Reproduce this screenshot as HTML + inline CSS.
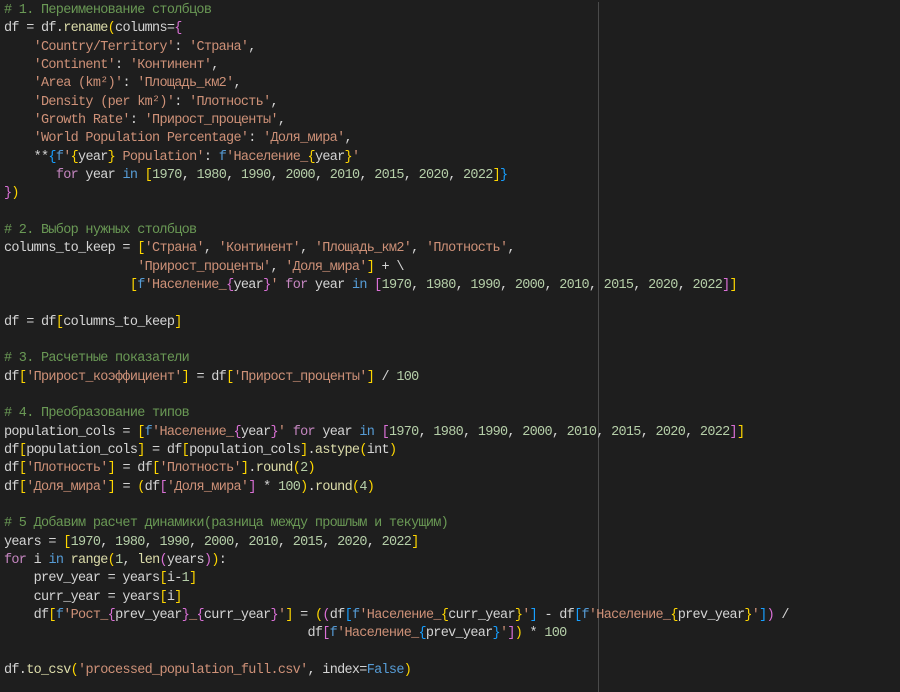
<!DOCTYPE html>
<html><head><meta charset="utf-8"><style>
html,body{margin:0;padding:0;background:#1e1e1e;width:900px;height:692px;overflow:hidden}
pre{margin:0;position:absolute;left:4px;top:2px;font-family:"Liberation Mono","DejaVu Sans Mono",monospace;font-size:13.5px;letter-spacing:-0.7px;line-height:18.33px;color:#d4d4d4;white-space:pre}
.ruler{position:absolute;left:598px;top:2px;width:1px;height:690px;background:#4a4a4a}
.c{color:#6a9955}.s{color:#ce9178}.n{color:#b5cea8}.k{color:#c586c0}.b{color:#569cd6}.f{color:#dcdcaa}
.y{color:#ffd700}.p{color:#da70d6}.u{color:#179fff}
</style></head><body>
<div class="ruler"></div>
<pre><span class="c"># 1. Переименование столбцов</span>
df = df.<span class="f">rename</span><span class="y">(</span>columns=<span class="p">{</span>
    <span class="s">'Country/Territory'</span>: <span class="s">'Страна'</span>,
    <span class="s">'Continent'</span>: <span class="s">'Континент'</span>,
    <span class="s">'Area (km²)'</span>: <span class="s">'Площадь_км2'</span>,
    <span class="s">'Density (per km²)'</span>: <span class="s">'Плотность'</span>,
    <span class="s">'Growth Rate'</span>: <span class="s">'Прирост_проценты'</span>,
    <span class="s">'World Population Percentage'</span>: <span class="s">'Доля_мира'</span>,
    **<span class="u">{</span><span class="b">f</span><span class="s">'</span><span class="y">{</span>year<span class="y">}</span><span class="s"> Population'</span>: <span class="b">f</span><span class="s">'Население_</span><span class="y">{</span>year<span class="y">}</span><span class="s">'</span>
       <span class="k">for</span> year <span class="b">in</span> <span class="y">[</span><span class="n">1970</span>, <span class="n">1980</span>, <span class="n">1990</span>, <span class="n">2000</span>, <span class="n">2010</span>, <span class="n">2015</span>, <span class="n">2020</span>, <span class="n">2022</span><span class="y">]</span><span class="u">}</span>
<span class="p">}</span><span class="y">)</span>

<span class="c"># 2. Выбор нужных столбцов</span>
columns_to_keep = <span class="y">[</span><span class="s">'Страна'</span>, <span class="s">'Континент'</span>, <span class="s">'Площадь_км2'</span>, <span class="s">'Плотность'</span>,
                  <span class="s">'Прирост_проценты'</span>, <span class="s">'Доля_мира'</span><span class="y">]</span> + \
                 <span class="y">[</span><span class="b">f</span><span class="s">'Население_</span><span class="p">{</span>year<span class="p">}</span><span class="s">'</span> <span class="k">for</span> year <span class="b">in</span> <span class="p">[</span><span class="n">1970</span>, <span class="n">1980</span>, <span class="n">1990</span>, <span class="n">2000</span>, <span class="n">2010</span>, <span class="n">2015</span>, <span class="n">2020</span>, <span class="n">2022</span><span class="p">]</span><span class="y">]</span>

df = df<span class="y">[</span>columns_to_keep<span class="y">]</span>

<span class="c"># 3. Расчетные показатели</span>
df<span class="y">[</span><span class="s">'Прирост_коэффициент'</span><span class="y">]</span> = df<span class="y">[</span><span class="s">'Прирост_проценты'</span><span class="y">]</span> / <span class="n">100</span>

<span class="c"># 4. Преобразование типов</span>
population_cols = <span class="y">[</span><span class="b">f</span><span class="s">'Население_</span><span class="p">{</span>year<span class="p">}</span><span class="s">'</span> <span class="k">for</span> year <span class="b">in</span> <span class="p">[</span><span class="n">1970</span>, <span class="n">1980</span>, <span class="n">1990</span>, <span class="n">2000</span>, <span class="n">2010</span>, <span class="n">2015</span>, <span class="n">2020</span>, <span class="n">2022</span><span class="p">]</span><span class="y">]</span>
df<span class="y">[</span>population_cols<span class="y">]</span> = df<span class="y">[</span>population_cols<span class="y">]</span>.<span class="f">astype</span><span class="y">(</span>int<span class="y">)</span>
df<span class="y">[</span><span class="s">'Плотность'</span><span class="y">]</span> = df<span class="y">[</span><span class="s">'Плотность'</span><span class="y">]</span>.<span class="f">round</span><span class="y">(</span><span class="n">2</span><span class="y">)</span>
df<span class="y">[</span><span class="s">'Доля_мира'</span><span class="y">]</span> = <span class="y">(</span>df<span class="p">[</span><span class="s">'Доля_мира'</span><span class="p">]</span> * <span class="n">100</span><span class="y">)</span>.<span class="f">round</span><span class="y">(</span><span class="n">4</span><span class="y">)</span>

<span class="c"># 5 Добавим расчет динамики(разница между прошлым и текущим)</span>
years = <span class="y">[</span><span class="n">1970</span>, <span class="n">1980</span>, <span class="n">1990</span>, <span class="n">2000</span>, <span class="n">2010</span>, <span class="n">2015</span>, <span class="n">2020</span>, <span class="n">2022</span><span class="y">]</span>
<span class="k">for</span> i <span class="b">in</span> <span class="f">range</span><span class="y">(</span><span class="n">1</span>, <span class="f">len</span><span class="p">(</span>years<span class="p">)</span><span class="y">)</span>:
    prev_year = years<span class="y">[</span>i-<span class="n">1</span><span class="y">]</span>
    curr_year = years<span class="y">[</span>i<span class="y">]</span>
    df<span class="y">[</span><span class="b">f</span><span class="s">'Рост_</span><span class="p">{</span>prev_year<span class="p">}</span><span class="s">_</span><span class="p">{</span>curr_year<span class="p">}</span><span class="s">'</span><span class="y">]</span> = <span class="y">(</span><span class="p">(</span>df<span class="u">[</span><span class="b">f</span><span class="s">'Население_</span><span class="y">{</span>curr_year<span class="y">}</span><span class="s">'</span><span class="u">]</span> - df<span class="u">[</span><span class="b">f</span><span class="s">'Население_</span><span class="y">{</span>prev_year<span class="y">}</span><span class="s">'</span><span class="u">]</span><span class="p">)</span> /
                                         df<span class="p">[</span><span class="b">f</span><span class="s">'Население_</span><span class="u">{</span>prev_year<span class="u">}</span><span class="s">'</span><span class="p">]</span><span class="y">)</span> * <span class="n">100</span>

df.<span class="f">to_csv</span><span class="y">(</span><span class="s">'processed_population_full.csv'</span>, index=<span class="b">False</span><span class="y">)</span></pre>
</body></html>
